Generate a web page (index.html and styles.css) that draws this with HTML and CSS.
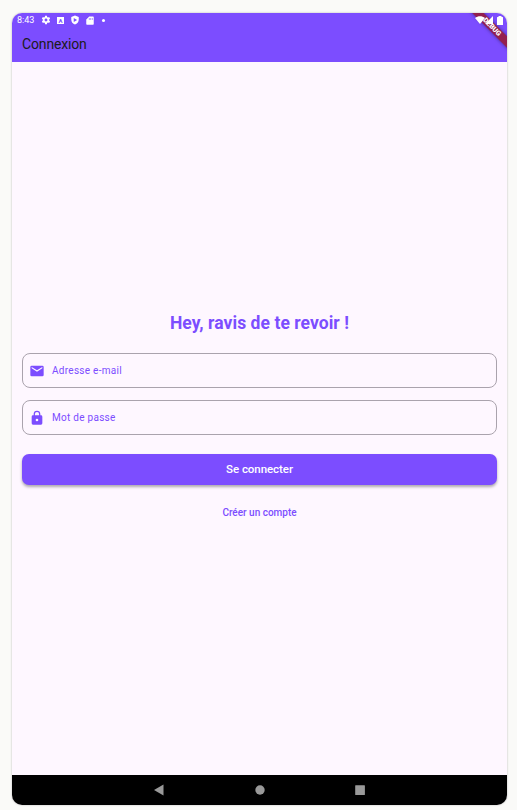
FILE: index.html
```html
<!DOCTYPE html>
<html lang="fr">
<head>
<meta charset="utf-8">
<title>Connexion</title>
<link rel="stylesheet" href="styles.css">
</head>
<body>
<div class="device">
  <header class="app-bar">
    <div class="status">
      <span class="clock">8:43</span>
      <svg class="ic gear" viewBox="0 0 24 24"><path fill-rule="evenodd" d="M20.400 13a7.500 7.500 0 0 0 0-2l2.100-1.600-2-3.500-2.500 1a7 7 0 0 0-1.700-1L15.900 3h-4l-.4 2.900a7 7 0 0 0-1.700 1l-2.500-1-2 3.500L7.400 11a7.500 7.500 0 0 0 0 2l-2.100 1.600 2 3.500 2.500-1a7 7 0 0 0 1.700 1l.4 2.900h4l.4-2.900a7 7 0 0 0 1.700-1l2.500 1 2-3.500zM13.900 15a3 3 0 1 1 0-6 3 3 0 0 1 0 6z" transform="matrix(1.150 0 0 1.150 -4 -1.800)"/></svg>
      <span class="badge-a">A</span>
      <svg class="ic shield" viewBox="0 0 24 24"><path fill-rule="evenodd" d="M12 1 3 5v6c0 5.600 3.800 10.700 9 12 5.200-1.300 9-6.400 9-12V5zM9 7l8 5-8 5z"/></svg>
      <svg class="ic sd" viewBox="0 0 20 24"><path fill-rule="evenodd" d="M8 1h10a2 2 0 0 1 2 2v18a2 2 0 0 1-2 2H2a2 2 0 0 1-2-2V9zM7 6v4h2V6zM11 6v4h2V6zM15 6v4h2V6z"/></svg>
      <span class="dot"></span>
      <svg class="wifi" viewBox="0 0 10 8"><path d="M0 2C3-.5 7-.5 10 2L5 8z"/></svg>
      <svg class="signal" viewBox="0 0 8 8"><path d="M8 0v8H0z"/></svg>
      <svg class="battery" viewBox="0 0 6 9"><path d="M1.500 1V0h3v1H5.500q.5 0 .5.500v7q0 .5-.5.500h-5Q0 9 0 8.500v-7Q0 1 .5 1z"/></svg>
    </div>
    <h1 class="title">Connexion</h1>
    <span class="ribbon">DEBUG</span>
  </header>
  <main class="content">
    <h2 class="greeting">Hey, ravis de te revoir !</h2>
    <div class="field">
      <svg class="field-icon" viewBox="0 0 24 24"><path d="M20 4H4a2 2 0 0 0-2 2v12a2 2 0 0 0 2 2h16a2 2 0 0 0 2-2V6a2 2 0 0 0-2-2zm0 4-8 5-8-5V6l8 5 8-5z"/></svg>
      <span>Adresse e-mail</span>
    </div>
    <div class="field">
      <svg class="field-icon" viewBox="0 0 24 24"><path d="M18 8h-1V6A5 5 0 0 0 7 6v2H6a2 2 0 0 0-2 2v10a2 2 0 0 0 2 2h12a2 2 0 0 0 2-2V10a2 2 0 0 0-2-2zm-6 9a2 2 0 1 1 0-4 2 2 0 0 1 0 4zm3.100-9H8.900V6a3.100 3.100 0 0 1 6.200 0z"/></svg>
      <span>Mot de passe</span>
    </div>
    <button class="submit">Se connecter</button>
    <a class="create">Créer un compte</a>
  </main>
  <nav class="nav">
    <svg class="nav-icon" viewBox="0 0 12 12"><path d="M9.500.5v11L0 6z"/></svg>
    <svg class="nav-icon" viewBox="0 0 12 12"><circle cx="6" cy="6" r="4.700"/></svg>
    <svg class="nav-icon" viewBox="0 0 12 12"><rect x="1.200" y="1.200" width="9.700" height="9.700" rx=".5"/></svg>
  </nav>
</div>
</body>
</html>
```
FILE: styles.css
```css
* { box-sizing: border-box; }
body {
  margin: 0;
  padding: 13px 10px 5px 12px;
  height: 810px;
  overflow: hidden;
  background: #fafaf8;
  font-family: Roboto, sans-serif;
}
.device {
  display: flex;
  flex-direction: column;
  height: 792px;
  border-radius: 10px;
  overflow: hidden;
  background: #fef7ff;
  box-shadow: 0 0 2px rgba(0, 0, 0, .3);
}
.app-bar {
  position: relative;
  overflow: hidden;
  height: 49px;
  background: #7c4dff;
}
.status {
  position: relative;
  z-index: 1;
  display: flex;
  align-items: center;
  height: 14px;
  padding: 0 4px 0 5px;
  color: #fff;
  fill: #fff;
}
.clock { width: 24px; font-size: 9px; line-height: 14px; }
.ic { width: 10px; height: 10px; }
.badge-a {
  width: 7px;
  height: 7px;
  margin: 0 6px;
  background: #fff;
  color: #7c4dff;
  font-size: 6px;
  font-weight: 700;
  line-height: 7px;
  text-align: center;
}
.sd { width: 8px; height: 9px; margin-left: 6px; }
.dot { width: 3px; height: 3px; margin-left: 8px; border-radius: 50%; background: #fff; }
.wifi { width: 10px; height: 8px; margin-left: auto; }
.signal { width: 8px; height: 8px; margin: 0 4px 0 0; }
.battery { width: 6px; height: 9px; }
.title {
  margin: 7px 0 0 10px;
  color: #1d1b20;
  font-size: 14px;
  font-weight: 400;
  line-height: 20px;
  letter-spacing: -.15px;
}
.ribbon {
  position: absolute;
  top: 10px;
  right: -20px;
  width: 70px;
  height: 8px;
  background: rgba(150, 25, 55, .88);
  box-shadow: 0 0 4px rgba(0, 0, 0, .45);
  color: #fff;
  font-size: 7px;
  font-weight: 900;
  line-height: 8px;
  text-align: center;
  transform: rotate(45deg);
}
.content {
  flex: 1;
  display: flex;
  flex-direction: column;
  padding: 251px 10px 0;
}
.greeting {
  margin: 0 0 19px;
  color: #7c4dff;
  font-size: 17.500px;
  font-weight: 700;
  line-height: 21px;
  letter-spacing: .05px;
  text-align: center;
}
.field {
  display: flex;
  align-items: center;
  height: 35px;
  margin-bottom: 12px;
  padding-left: 6px;
  border: 1px solid #aaa3ad;
  border-radius: 8px;
  color: #7c4dff;
  font-size: 10px;
  letter-spacing: .28px;
}
.field-icon { width: 16px; height: 16px; margin-right: 7px; fill: #7c4dff; }
.submit {
  height: 31px;
  margin-top: 7px;
  padding: 0;
  border: 0;
  border-radius: 7px;
  background: #7c4dff;
  box-shadow: 0 2px 3px rgba(0, 0, 0, .32);
  color: #fff;
  font: 500 11.500px/31px Roboto, sans-serif;
  letter-spacing: -.06px;
}
.create {
  margin-top: 20px;
  color: #7c4dff;
  font-size: 10px;
  font-weight: 500;
  line-height: 15px;
  text-align: center;
}
.nav {
  display: flex;
  justify-content: center;
  align-items: center;
  gap: 88px;
  height: 30px;
  background: #000;
}
.nav-icon { width: 12px; height: 12px; fill: #999; }
```
